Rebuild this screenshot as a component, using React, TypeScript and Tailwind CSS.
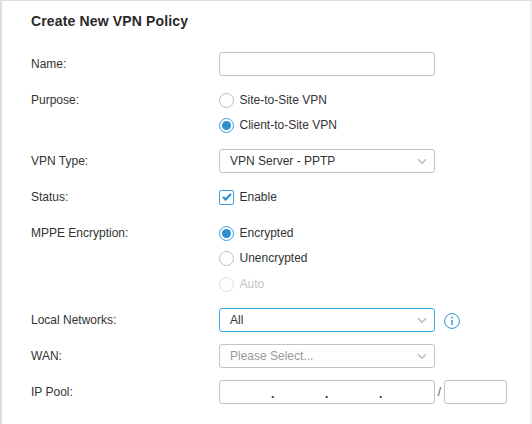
function Row({ label, h, children }: { label: string; h: string; children: React.ReactNode }) {
  return (
    <div className={`flex ${h}`}>
      <div className="w-[188px] h-6 leading-6 shrink-0">{label}</div>
      <div className="flex-1 min-w-0">{children}</div>
    </div>
  );
}

function Radio({ label, checked, disabled }: { label: string; checked?: boolean; disabled?: boolean }) {
  const ring = checked ? "border-[#3aa0dc]" : disabled ? "border-[#dcdcdc]" : "border-[#bdbdbd]";
  return (
    <div className={`flex items-center gap-[6px] h-[25px] ${disabled ? "mt-px" : ""}`}>
      <span className={`w-[15px] h-[15px] rounded-full border flex items-center justify-center bg-white ${ring}`}>
        {checked && <span className="w-[9px] h-[9px] rounded-full bg-[#2b8fd0]" />}
      </span>
      <span className={`relative top-[-1px] left-[-0.5px] ${disabled ? "text-[#c4c4c4]" : "text-[#333333]"}`}>{label}</span>
    </div>
  );
}

function Box({ className = "", children }: { className?: string; children?: React.ReactNode }) {
  return (
    <div className={`h-6 rounded-[3px] border bg-white flex items-center ${className}`}>{children}</div>
  );
}

function Select({ value, focused, placeholder }: { value: string; focused?: boolean; placeholder?: boolean }) {
  return (
    <Box className={`w-[216px] pl-[10px] pr-[7px] justify-between ${focused ? "border-[#3aa9e4]" : "border-[#c4c4c4]"}`}>
      <span className={placeholder ? "text-[#999999]" : "text-[#333333]"}>{value}</span>
      <svg width="10" height="7" viewBox="0 0 10 7" fill="none" stroke="#bcbcbc" strokeWidth="1.5">
        <path d="M1 1.2l4 4 4-4" />
      </svg>
    </Box>
  );
}

export default function App() {
  return (
    <div className="w-[532px] h-[424px] overflow-hidden bg-white border-l-2 border-r-2 border-t border-l-[#dedede] border-t-[#dedede] border-r-[#f0f0f0] pl-[29px] font-['Liberation_Sans',Arial,sans-serif] text-[12px] text-[#333333]">
      <h1 className="h-[51px] pt-[12px] text-[14px] leading-[17px] font-bold tracking-[0.15px] text-[#2a2a2a]">Create New VPN Policy</h1>
      <Row label="Name:" h="h-[36px]">
        <Box className="w-[216px] border-[#c4c4c4]" />
      </Row>
      <div className="flex h-[61px]">
        <div className="w-[188px] leading-6 h-6 shrink-0">Purpose:</div>
        <div>
          <Radio label="Site-to-Site VPN" />
          <Radio label="Client-to-Site VPN" checked />
        </div>
      </div>
      <Row label="VPN Type:" h="h-[36px]">
        <Select value="VPN Server - PPTP" />
      </Row>
      <Row label="Status:" h="h-[36px]">
        <div className="flex items-center gap-[6px] h-6">
          <span className="w-[15px] h-[15px] rounded-[2px] border border-[#3aa0dc] flex items-center justify-center">
            <svg width="10" height="8" viewBox="0 0 10 8" fill="none" stroke="#2b8fd0" strokeWidth="2.2">
              <path d="M1 4l2.6 2.5L9 1" />
            </svg>
          </span>
          <span className="relative left-[-0.5px]">Enable</span>
        </div>
      </Row>
      <div className="flex h-[87px]">
        <div className="w-[188px] leading-6 h-6 shrink-0">MPPE Encryption:</div>
        <div>
          <Radio label="Encrypted" checked />
          <Radio label="Unencrypted" />
          <Radio label="Auto" disabled />
        </div>
      </div>
      <Row label="Local Networks:" h="h-[36px]">
        <div className="flex items-center gap-[9px]">
          <Select value="All" focused />
          <svg className="mt-[2px]" width="16" height="16" viewBox="0 0 16 16" fill="none" stroke="#2b8fd0">
            <circle cx="8" cy="8" r="7.4" />
            <path d="M8 7v5M8 3.8v1.7" strokeWidth="1.4" />
          </svg>
        </div>
      </Row>
      <Row label="WAN:" h="h-[36px]">
        <Select value="Please Select..." placeholder />
      </Row>
      <Row label="IP Pool:" h="h-[36px]">
        <div className="flex items-center">
          <Box className="w-[216px] border-[#c4c4c4] relative">
            <div className="grid grid-cols-3 w-[162px] ml-[51px] text-[#333333] font-bold leading-none">
              <span className="translate-y-[2px]">.</span>
              <span className="translate-y-[2px]">.</span>
              <span className="translate-y-[2px]">.</span>
            </div>
          </Box>
          <span className="w-[9px] text-center text-[#555555]">/</span>
          <Box className="w-[63px] border-[#c4c4c4]" />
        </div>
      </Row>
    </div>
  );
}
